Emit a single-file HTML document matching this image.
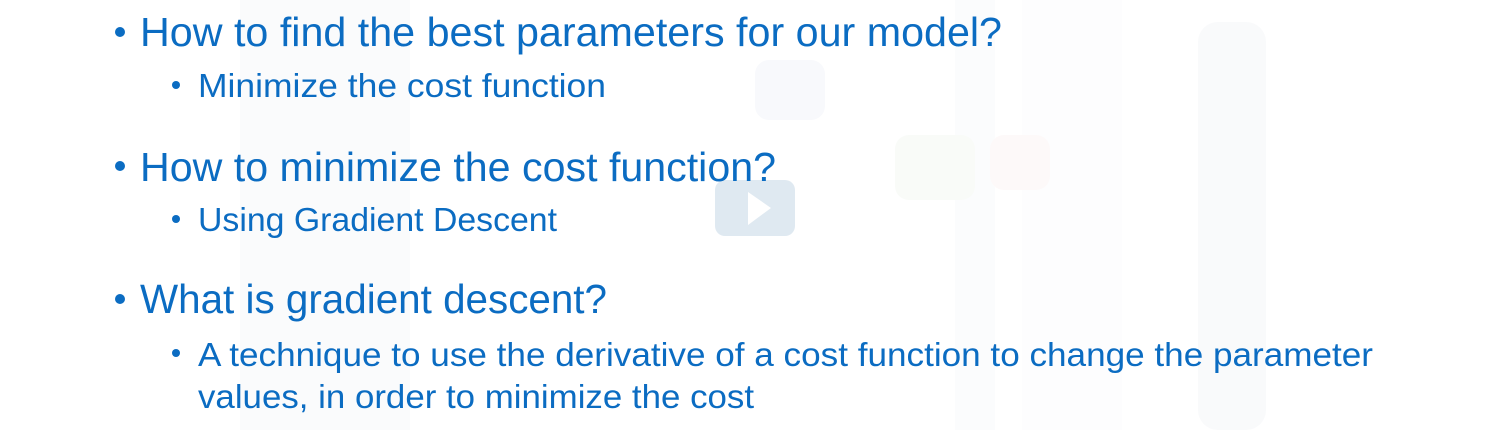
<!DOCTYPE html>
<html><head><style>
html,body{margin:0;padding:0;background:#fff;}
</style></head><body>
<svg width="1505" height="430" xmlns="http://www.w3.org/2000/svg" style="display:block">
<rect width="1505" height="430" fill="#fff"/>
<rect x="240" y="0" width="170" height="430" fill="#fafbfc"/>
<rect x="955" y="0" width="40" height="430" fill="#fbfcfd"/>
<rect x="1022" y="0" width="100" height="430" fill="#fdfdfe"/>
<rect x="1198" y="22" width="68" height="408" rx="20" fill="#f9fafb"/>
<rect x="755" y="60" width="70" height="60" rx="14" fill="#f8f9fc"/>
<rect x="895" y="135" width="80" height="65" rx="14" fill="#f9fbf8"/>
<rect x="990" y="135" width="60" height="55" rx="14" fill="#fdf9f9"/>
<rect x="715" y="180" width="80" height="56" rx="10" fill="#dfe9f1"/>
<path d="M748 192 L771 208 L748 225 Z" fill="#fff"/>
<g fill="#0b6cc2" font-family="'Liberation Sans', sans-serif">
<circle cx="120" cy="32" r="5"/>
<circle cx="120" cy="166" r="5"/>
<circle cx="120" cy="299" r="5"/>
<circle cx="176" cy="85" r="4"/>
<circle cx="176" cy="219" r="4"/>
<circle cx="176" cy="353" r="4"/>
<text x="140" y="46" font-size="41" textLength="862" lengthAdjust="spacingAndGlyphs">How to find the best parameters for our model?</text>
<text x="198" y="97" font-size="33" textLength="408" lengthAdjust="spacingAndGlyphs">Minimize the cost function</text>
<text x="140" y="181" font-size="41" textLength="636" lengthAdjust="spacingAndGlyphs">How to minimize the cost function?</text>
<text x="198" y="231" font-size="33" textLength="359" lengthAdjust="spacingAndGlyphs">Using Gradient Descent</text>
<text x="140" y="313" font-size="41" textLength="467" lengthAdjust="spacingAndGlyphs">What is gradient descent?</text>
<text x="198" y="366" font-size="33" textLength="1175" lengthAdjust="spacingAndGlyphs">A technique to use the derivative of a cost function to change the parameter</text>
<text x="198" y="408" font-size="33" textLength="556" lengthAdjust="spacingAndGlyphs">values, in order to minimize the cost</text>
</g>
</svg>
</body></html>
